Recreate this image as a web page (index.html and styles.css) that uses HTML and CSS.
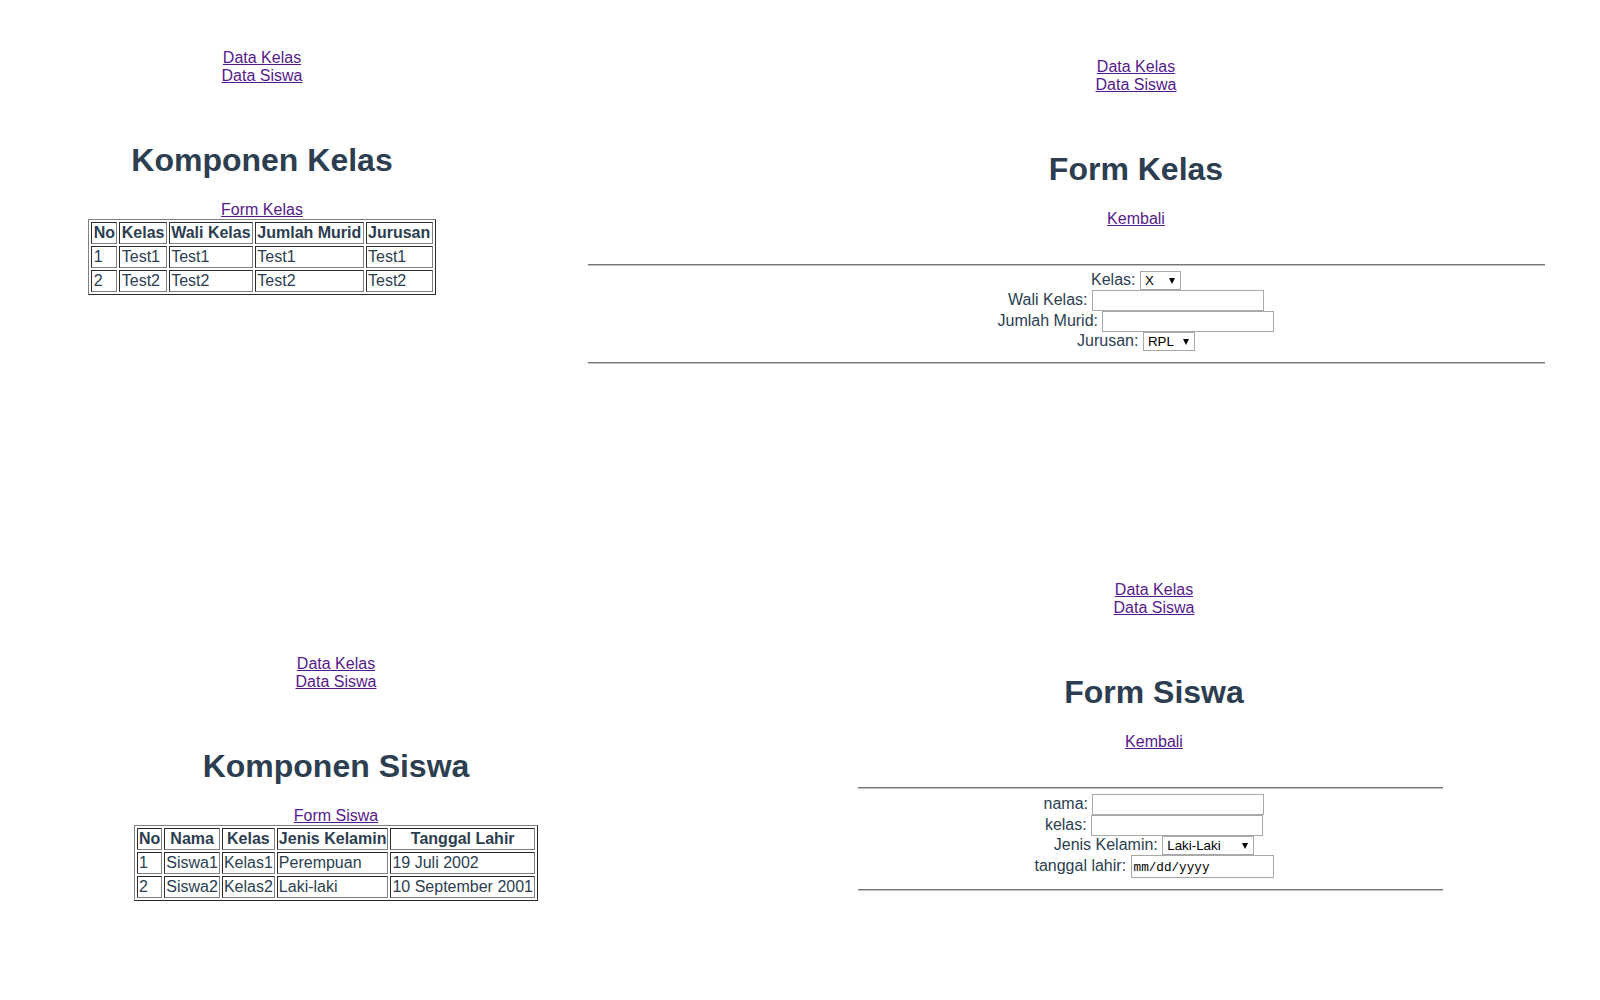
FILE: index.html
```html
<!DOCTYPE html>
<html lang="id">
<head>
<meta charset="utf-8">
<title>Data Kelas &amp; Data Siswa</title>
<link rel="stylesheet" href="styles.css">
</head>
<body>
<main class="canvas">

  <section class="window win-kelas">
    <nav class="nav"><a href="#">Data Kelas</a><br><a href="#">Data Siswa</a></nav>
    <h1 class="title">Komponen Kelas</h1>
    <div class="sub-link"><a href="#">Form Kelas</a></div>
    <table class="data-table">
      <thead>
        <tr><th>No</th><th>Kelas</th><th>Wali Kelas</th><th>Jumlah Murid</th><th>Jurusan</th></tr>
      </thead>
      <tbody>
        <tr><td>1</td><td>Test1</td><td>Test1</td><td>Test1</td><td>Test1</td></tr>
        <tr><td>2</td><td>Test2</td><td>Test2</td><td>Test2</td><td>Test2</td></tr>
      </tbody>
    </table>
  </section>

  <section class="window win-form-kelas">
    <div class="head">
      <nav class="nav"><a href="#">Data Kelas</a><br><a href="#">Data Siswa</a></nav>
      <h1 class="title">Form Kelas</h1>
      <div class="sub-link"><a href="#">Kembali</a></div>
    </div>
    <form class="form">
      <hr class="rule rule-top">
      <div class="rows">
        <div class="row"><label>Kelas:</label> <span class="select-wrap"><select class="select select-kelas"><option>X</option><option>XI</option><option>XII</option></select></span></div>
        <div class="row"><label>Wali Kelas:</label> <input class="text-input" type="text"></div>
        <div class="row"><label>Jumlah Murid:</label> <input class="text-input" type="text"></div>
        <div class="row"><label>Jurusan:</label> <span class="select-wrap"><select class="select select-jurusan"><option>RPL</option><option>TKJ</option><option>MM</option></select></span></div>
      </div>
      <hr class="rule rule-bottom">
    </form>
  </section>

  <section class="window win-siswa">
    <nav class="nav"><a href="#">Data Kelas</a><br><a href="#">Data Siswa</a></nav>
    <h1 class="title">Komponen Siswa</h1>
    <div class="sub-link"><a href="#">Form Siswa</a></div>
    <table class="data-table">
      <thead>
        <tr><th>No</th><th>Nama</th><th>Kelas</th><th>Jenis Kelamin</th><th>Tanggal Lahir</th></tr>
      </thead>
      <tbody>
        <tr><td>1</td><td>Siswa1</td><td>Kelas1</td><td>Perempuan</td><td>19 Juli 2002</td></tr>
        <tr><td>2</td><td>Siswa2</td><td>Kelas2</td><td>Laki-laki</td><td>10 September 2001</td></tr>
      </tbody>
    </table>
  </section>

  <section class="window win-form-siswa">
    <div class="head">
      <nav class="nav"><a href="#">Data Kelas</a><br><a href="#">Data Siswa</a></nav>
      <h1 class="title">Form Siswa</h1>
      <div class="sub-link"><a href="#">Kembali</a></div>
    </div>
    <form class="form">
      <hr class="rule rule-top">
      <div class="rows">
        <div class="row"><label>nama:</label> <input class="text-input" type="text"></div>
        <div class="row"><label>kelas:</label> <input class="text-input" type="text"></div>
        <div class="row"><label>Jenis Kelamin:</label> <span class="select-wrap"><select class="select select-jk"><option>Laki-Laki</option><option>Perempuan</option></select></span></div>
        <div class="row"><label>tanggal lahir:</label> <span class="date-input">mm/dd/yyyy</span></div>
      </div>
      <hr class="rule rule-bottom">
    </form>
  </section>

</main>
</body>
</html>
```

FILE: styles.css
```css
html,
body {
  margin: 0;
  padding: 0;
  background: #ffffff;
}

body {
  font-family: "Liberation Sans", Arial, sans-serif;
  font-size: 16px;
  color: #2c3e50;
}

.canvas {
  position: relative;
  width: 1600px;
  height: 1000px;
  overflow: hidden;
}

/* each screenshot window sits on the collage canvas */
.window {
  position: absolute;
  text-align: center;
}

.win-kelas {
  left: 0;
  top: 49px;
  width: 524px;
}

.win-siswa {
  left: 0;
  top: 655px;
  width: 672px;
}

.win-form-kelas {
  left: 588px;
  top: 58px;
  width: 957px;
}

.win-form-kelas .head,
.win-form-kelas .rows {
  padding-left: 139px;
}

.win-form-siswa {
  left: 858px;
  top: 581px;
  width: 585px;
}

.win-form-siswa .head,
.win-form-siswa .rows {
  padding-left: 7px;
}

a {
  color: #551a8b;
  text-decoration: underline;
}

.title {
  font-size: 32px;
  font-weight: bold;
  margin: 57px 0 22px;
}

/* tables */
.data-table {
  margin: 0 auto;
  border: 1px outset grey;
  border-spacing: 2px;
  font-size: 16px;
  color: #2c3e50;
}

.data-table th,
.data-table td {
  border: 1px inset grey;
  padding: 1px;
}

.win-kelas .data-table th,
.win-kelas .data-table td {
  padding: 1px 1.35px;
}

.data-table th {
  font-weight: bold;
  text-align: center;
}

.data-table td {
  text-align: left;
}

/* forms */
.form {
  margin: 0;
}

.rule {
  height: 0;
  border: 0;
  border-top: 1px solid #767676;
  border-bottom: 1px solid #c2c2c2;
}

.rule-top {
  margin: 36px 0 5px;
}

.rule-bottom {
  margin: 11px 0 0;
}

.text-input {
  box-sizing: border-box;
  width: 172px;
  height: 21px;
  margin: 0;
  padding: 1px 2px;
  border: 1px solid #a9a9a9;
  border-radius: 0;
  background: #ffffff;
  font-family: "Liberation Sans", Arial, sans-serif;
  font-size: 13.333px;
  color: #000000;
}

.select-wrap {
  position: relative;
  display: inline-block;
}

.select-wrap::after {
  content: "";
  position: absolute;
  right: 6px;
  top: 7px;
  width: 0;
  height: 0;
  border-left: 3px solid transparent;
  border-right: 3px solid transparent;
  border-top: 6px solid #000000;
  pointer-events: none;
}

.select {
  -webkit-appearance: none;
  appearance: none;
  box-sizing: border-box;
  height: 19px;
  margin: 0;
  padding: 0 4px;
  border: 1px solid #a9a9a9;
  border-radius: 0;
  background: #ffffff;
  font-family: "Liberation Sans", Arial, sans-serif;
  font-size: 13.333px;
  color: #000000;
}

.select-kelas {
  width: 41px;
}

.select-jurusan {
  width: 52px;
}

.select-jk {
  width: 92px;
}

.date-input {
  display: inline-block;
  box-sizing: border-box;
  width: 143px;
  height: 23px;
  padding: 2px 2px 0;
  border: 1px solid #a9a9a9;
  background: #ffffff;
  font-family: "Liberation Mono", "DejaVu Sans Mono", monospace;
  font-size: 12.67px;
  line-height: 19px;
  text-align: left;
  color: #000000;
}
```
